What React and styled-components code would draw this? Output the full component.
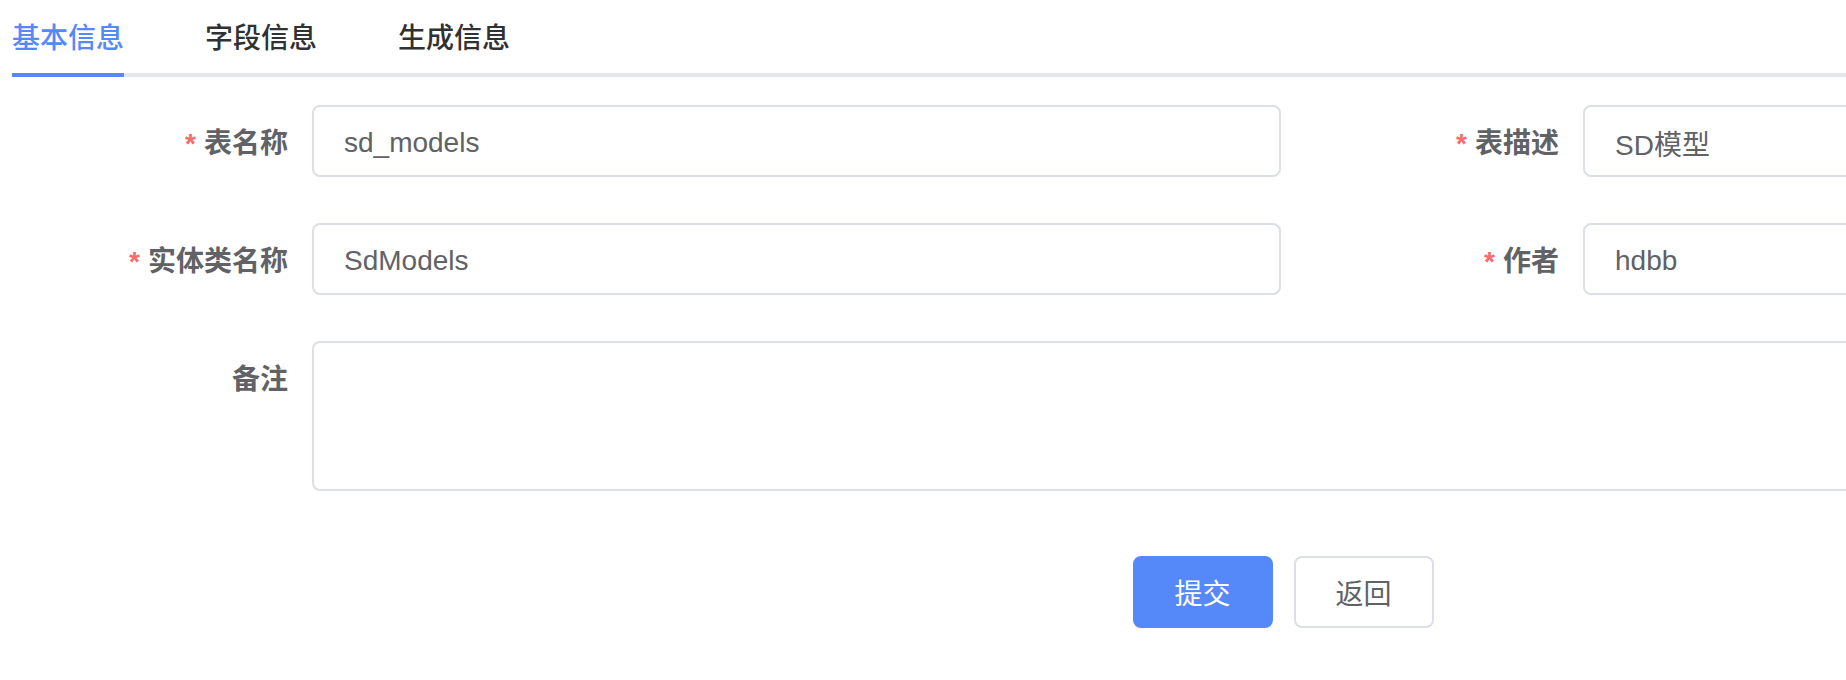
import React from 'react';
import styled, { createGlobalStyle } from 'styled-components';

const GlobalStyles = createGlobalStyle`
  html, body {
    margin: 0;
    padding: 0;
    background: #fff;
    overflow: hidden;
  }
  body {
    font-family: "Liberation Sans", "Noto Sans CJK SC", sans-serif;
  }
`

const blue = '#5589fa';

const Page = styled.div`
  width: 1834px;
  padding-left: 12px;
`

const TabList = styled.div`
  display: flex;
  gap: 81px;
  border-bottom: 4px solid #e4e7ed;
`

const Tab = styled.div`
  height: 77px;
  box-sizing: border-box;
  padding-top: 4px;
  line-height: 69px;
  font-size: 28px;
  font-weight: 500;
  color: ${p => (p.$active ? blue : '#303133')};
  border-bottom: 4px solid ${p => (p.$active ? blue : 'transparent')};
  margin-bottom: -4px;
  cursor: pointer;
`

const Form = styled.form`
  width: 2542px;
  margin-top: 28px;
`

const Row = styled.div`
  display: grid;
  grid-template-columns: ${p => (p.$single ? '1fr' : '1fr 1fr')};
  margin-bottom: ${p => p.$gap || 46}px;
`

const Item = styled.div`
  display: flex;
  align-items: flex-start;
`

const Label = styled.label`
  width: 300px;
  height: 72px;
  flex: none;
  box-sizing: border-box;
  padding: 3px 24px 0 0;
  text-align: right;
  line-height: 72px;
  font-size: 28px;
  font-weight: 700;
  color: #606266;
`

const Star = styled.span`
  color: #f56c6c;
  margin-right: 8px;
`

const Control = styled.div`
  flex: 1;
  padding-right: ${p => (p.$full ? 0 : 2)}px;
`

const Input = styled.input`
  display: block;
  width: 100%;
  height: 72px;
  box-sizing: border-box;
  border: 2px solid #dcdfe6;
  border-radius: 8px;
  padding: 3px 30px 0;
  font-family: inherit;
  font-size: 28px;
  color: #606266;
  outline: none;
  background: #fff;
`

const TextArea = styled.textarea`
  display: block;
  width: 100%;
  height: 150px;
  box-sizing: border-box;
  border: 2px solid #dcdfe6;
  border-radius: 8px;
  padding: 10px 30px;
  font-family: inherit;
  font-size: 28px;
  color: #606266;
  outline: none;
  resize: none;
`

const Footer = styled.div`
  display: flex;
  justify-content: center;
  gap: 21px;
`

const Button = styled.button`
  width: 140px;
  height: 72px;
  box-sizing: border-box;
  border-radius: 8px;
  font-family: inherit;
  font-size: 28px;
  cursor: pointer;
  border: 2px solid ${p => (p.$primary ? blue : '#dcdfe6')};
  background: ${p => (p.$primary ? blue : '#fff')};
  color: ${p => (p.$primary ? '#fff' : '#606266')};
`

function Field({ label, required, value }) {
  return (
    <Item>
      <Label>
        {required && <Star>*</Star>}
        {label}
      </Label>
      <Control>
        <Input defaultValue={value} />
      </Control>
    </Item>
  )
}

function App() {
  return (
    <>
      <GlobalStyles />
      <Page>
        <TabList>
          <Tab $active>基本信息</Tab>
          <Tab>字段信息</Tab>
          <Tab>生成信息</Tab>
        </TabList>

        <Form onSubmit={e => e.preventDefault()}>
          <Row>
            <Field required label="表名称" value="sd_models" />
            <Field required label="表描述" value="SD模型" />
          </Row>
          <Row>
            <Field required label="实体类名称" value="SdModels" />
            <Field required label="作者" value="hdbb" />
          </Row>
          <Row $single $gap={65}>
            <Item>
              <Label>备注</Label>
              <Control $full>
                <TextArea />
              </Control>
            </Item>
          </Row>
          <Footer>
            <Button $primary type="submit">提交</Button>
            <Button type="button">返回</Button>
          </Footer>
        </Form>
      </Page>
    </>
  );
}

export default App;
